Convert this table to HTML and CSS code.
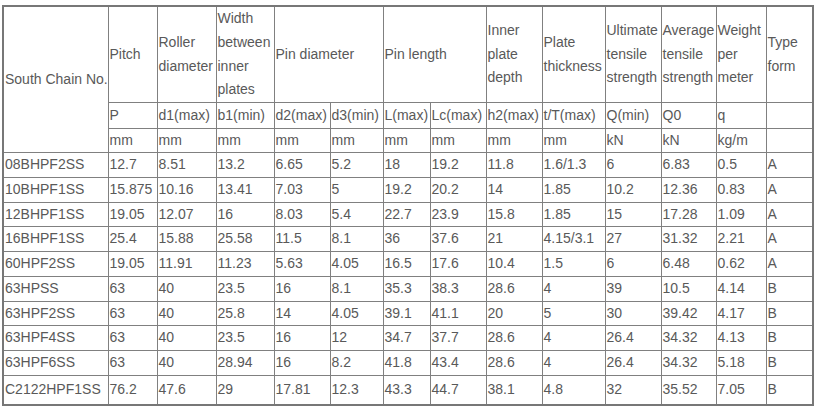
FILE: index.html
```html
<!DOCTYPE html>
<html lang="en">
<head>
<meta charset="utf-8">
<title>South Chain</title>
<link rel="stylesheet" href="styles.css">
</head>
<body>
<table class="spec">
<colgroup>
<col class="c-no"><col class="c-pitch"><col class="c-roller"><col class="c-width"><col class="c-d2"><col class="c-d3"><col class="c-l"><col class="c-lc"><col class="c-h2"><col class="c-t"><col class="c-q"><col class="c-q0"><col class="c-w"><col class="c-type">
</colgroup>
<thead>
<tr class="head">
<th rowspan="3" class="name">South Chain No.</th>
<th>Pitch</th>
<th>Roller diameter</th>
<th>Width between inner plates</th>
<th colspan="2">Pin diameter</th>
<th colspan="2">Pin length</th>
<th>Inner plate depth</th>
<th>Plate thickness</th>
<th>Ultimate tensile strength</th>
<th>Average tensile strength</th>
<th>Weight per meter</th>
<th>Type form</th>
</tr>
<tr class="sym">
<th>P</th><th>d1(max)</th><th>b1(min)</th><th>d2(max)</th><th>d3(min)</th><th>L(max)</th><th>Lc(max)</th><th>h2(max)</th><th>t/T(max)</th><th>Q(min)</th><th>Q0</th><th>q</th><th></th>
</tr>
<tr class="unit">
<th>mm</th><th>mm</th><th>mm</th><th>mm</th><th>mm</th><th>mm</th><th>mm</th><th>mm</th><th>mm</th><th>kN</th><th>kN</th><th>kg/m</th><th></th>
</tr>
</thead>
<tbody>
<tr><td>08BHPF2SS</td><td>12.7</td><td>8.51</td><td>13.2</td><td>6.65</td><td>5.2</td><td>18</td><td>19.2</td><td>11.8</td><td>1.6/1.3</td><td>6</td><td>6.83</td><td>0.5</td><td>A</td></tr>
<tr><td>10BHPF1SS</td><td>15.875</td><td>10.16</td><td>13.41</td><td>7.03</td><td>5</td><td>19.2</td><td>20.2</td><td>14</td><td>1.85</td><td>10.2</td><td>12.36</td><td>0.83</td><td>A</td></tr>
<tr><td>12BHPF1SS</td><td>19.05</td><td>12.07</td><td>16</td><td>8.03</td><td>5.4</td><td>22.7</td><td>23.9</td><td>15.8</td><td>1.85</td><td>15</td><td>17.28</td><td>1.09</td><td>A</td></tr>
<tr><td>16BHPF1SS</td><td>25.4</td><td>15.88</td><td>25.58</td><td>11.5</td><td>8.1</td><td>36</td><td>37.6</td><td>21</td><td>4.15/3.1</td><td>27</td><td>31.32</td><td>2.21</td><td>A</td></tr>
<tr><td>60HPF2SS</td><td>19.05</td><td>11.91</td><td>11.23</td><td>5.63</td><td>4.05</td><td>16.5</td><td>17.6</td><td>10.4</td><td>1.5</td><td>6</td><td>6.48</td><td>0.62</td><td>A</td></tr>
<tr><td>63HPSS</td><td>63</td><td>40</td><td>23.5</td><td>16</td><td>8.1</td><td>35.3</td><td>38.3</td><td>28.6</td><td>4</td><td>39</td><td>10.5</td><td>4.14</td><td>B</td></tr>
<tr><td>63HPF2SS</td><td>63</td><td>40</td><td>25.8</td><td>14</td><td>4.05</td><td>39.1</td><td>41.1</td><td>20</td><td>5</td><td>30</td><td>39.42</td><td>4.17</td><td>B</td></tr>
<tr><td>63HPF4SS</td><td>63</td><td>40</td><td>23.5</td><td>16</td><td>12</td><td>34.7</td><td>37.7</td><td>28.6</td><td>4</td><td>26.4</td><td>34.32</td><td>4.13</td><td>B</td></tr>
<tr><td>63HPF6SS</td><td>63</td><td>40</td><td>28.94</td><td>16</td><td>8.2</td><td>41.8</td><td>43.4</td><td>28.6</td><td>4</td><td>26.4</td><td>34.32</td><td>5.18</td><td>B</td></tr>
<tr class="last"><td>C2122HPF1SS</td><td>76.2</td><td>47.6</td><td>29</td><td>17.81</td><td>12.3</td><td>43.3</td><td>44.7</td><td>38.1</td><td>4.8</td><td>32</td><td>35.52</td><td>7.05</td><td>B</td></tr>
</tbody>
</table>
</body>
</html>
```
FILE: styles.css
```css
html, body {
  margin: 0;
  padding: 0;
  background: #ffffff;
}

.spec {
  margin: 5px 0 0 2px;
  width: 811px;
  table-layout: fixed;
  border-collapse: collapse;
  border: 2px solid #777777;
  font-family: "Liberation Sans", Arial, sans-serif;
  font-size: 14px;
  color: #595959;
}

.spec th,
.spec td {
  border: 1px solid #808080;
  padding: 0 0 0 1px;
  line-height: 23.75px;
  text-align: left;
  vertical-align: middle;
  font-weight: normal;
  overflow: hidden;
}

.spec .name {
  white-space: nowrap;
  overflow: visible;
}

.c-no { width: 105px; }
.c-pitch { width: 49px; }
.c-roller { width: 59px; }
.c-width { width: 58px; }
.c-d2 { width: 56px; }
.c-d3 { width: 53px; }
.c-l { width: 47px; }
.c-lc { width: 56px; }
.c-h2 { width: 56px; }
.c-t { width: 63px; }
.c-q { width: 56px; }
.c-q0 { width: 55px; }
.c-w { width: 50px; }
.c-type { width: 47px; }

.spec .sym th { line-height: 24.5px; }
.spec .unit th { line-height: 23.5px; }

.spec .last td { height: 28px; }
```
